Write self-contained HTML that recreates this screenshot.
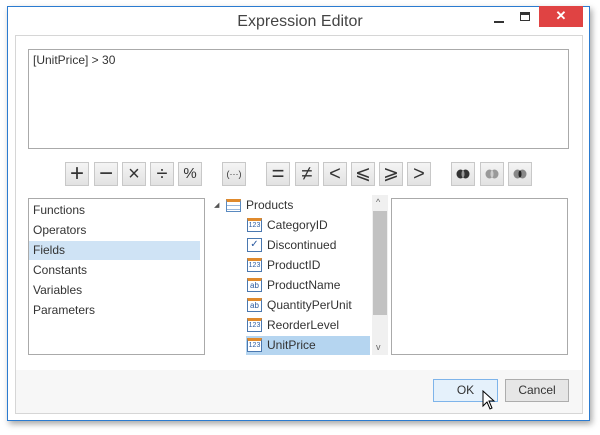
<!DOCTYPE html>
<html><head><style>
*{margin:0;padding:0;box-sizing:border-box}
body{width:600px;height:435px;background:#fff;font-family:"Liberation Sans",sans-serif;font-size:12px;color:#333;position:relative;overflow:hidden}
.abs{position:absolute}
.win{left:7px;top:6px;width:583px;height:415px;border:1px solid #2b7bd0;background:#fff;box-shadow:2px 3px 6px rgba(0,0,0,.35)}
.btn{position:absolute;top:162px;width:24px;height:24px;background:linear-gradient(#f4f4f4,#e2e2e2);border:1px solid #c8c8c8;text-align:center;line-height:22px;font-size:19px;color:#333}
.li{position:absolute;left:4px;height:19px;line-height:19px;font-size:12px;color:#333}
.ti{position:absolute;height:20px;line-height:20px;font-size:12px;color:#333}
.ic{position:absolute;width:15px;height:14px;border:1px solid #4a78b0;background:#fff;font-size:7px;line-height:9px;text-align:center;color:#2a5aa0;border-top:3px solid #e08a2c}
</style></head><body>
<div class="abs win"></div>
<div class="abs" style="left:0;top:13px;width:600px;text-align:center;font-size:16px;color:#444">Expression Editor</div>
<div class="abs" style="left:494px;top:21px;width:10px;height:2px;background:#333"></div>
<div class="abs" style="left:520px;top:12px;width:10px;height:9px;border:1px solid #333;border-top:3px solid #333"></div>
<div class="abs" style="left:539px;top:6px;width:44px;height:21px;background:#e04343;color:#fff;text-align:center;font-size:13px;font-weight:bold;line-height:20px">✕</div>
<div class="abs" style="left:15px;top:35px;width:568px;height:379px;border:1px solid #d6d6d6;background:#fff"></div>
<div class="abs" style="left:16px;top:370px;width:566px;height:43px;background:#f7f7f7"></div>
<div class="abs" style="left:28px;top:49px;width:541px;height:100px;border:1px solid #aaa;padding:3px 4px;font-size:12px">[UnitPrice] &gt; 30</div>

<div class="btn" style="left:65px;font-size:24px">+</div>
<div class="btn" style="left:94px;font-size:24px">−</div>
<div class="btn" style="left:122px;font-size:20px">×</div>
<div class="btn" style="left:150px;font-size:20px">÷</div>
<div class="btn" style="left:178px;font-size:15px">%</div>
<div class="btn" style="left:222px;font-size:9px">(···)</div>
<div class="btn" style="left:266px;font-size:22px">=</div>
<div class="btn" style="left:295px;font-size:20px">≠</div>
<div class="btn" style="left:323px;font-size:20px">&lt;</div>
<div class="btn" style="left:351px">⩽</div>
<div class="btn" style="left:379px">⩾</div>
<div class="btn" style="left:407px;font-size:20px">&gt;</div>
<div class="btn" style="left:451px"><svg width="14" height="10" style="margin-top:6px"><ellipse cx="4.5" cy="5" rx="4" ry="4.5" fill="#333"/><ellipse cx="9.5" cy="5" rx="4" ry="4.5" fill="#333"/><ellipse cx="7" cy="5" rx="1.5" ry="3.5" fill="#999"/></svg></div>
<div class="btn" style="left:480px"><svg width="14" height="10" style="margin-top:6px"><ellipse cx="4.5" cy="5" rx="4" ry="4.5" fill="#999"/><ellipse cx="9.5" cy="5" rx="4" ry="4.5" fill="#999"/><ellipse cx="7" cy="5" rx="1.5" ry="3.5" fill="#ccc"/></svg></div>
<div class="btn" style="left:508px"><svg width="14" height="10" style="margin-top:6px"><ellipse cx="4.5" cy="5" rx="4" ry="4.5" fill="#888"/><ellipse cx="9.5" cy="5" rx="4" ry="4.5" fill="#888"/><ellipse cx="7" cy="5" rx="1.5" ry="3.5" fill="#222"/></svg></div>

<div class="abs" style="left:28px;top:198px;width:177px;height:157px;border:1px solid #aaa"></div>
<div class="abs" style="left:29px;top:241px;width:171px;height:19px;background:#cfe3f5"></div>
<div class="li" style="left:33px;top:201px">Functions</div>
<div class="li" style="left:33px;top:221px">Operators</div>
<div class="li" style="left:33px;top:241px">Fields</div>
<div class="li" style="left:33px;top:261px">Constants</div>
<div class="li" style="left:33px;top:281px">Variables</div>
<div class="li" style="left:33px;top:301px">Parameters</div>

<div class="abs" style="left:372px;top:195px;width:16px;height:160px;background:#f0f0f0"></div>
<div class="abs" style="left:373px;top:211px;width:14px;height:104px;background:#c2c2c2"></div>
<div class="abs" style="left:376px;top:197px;font-size:9px;color:#666">^</div>
<div class="abs" style="left:376px;top:342px;font-size:9px;color:#666">v</div>
<div class="abs" style="left:246px;top:336px;width:124px;height:19px;background:#b5d5f0"></div>
<div class="abs" style="left:214px;top:201px;font-size:7px;color:#555">◢</div>
<div class="abs" style="left:226px;top:199px;width:15px;height:13px;border:1px solid #5a8ac0;background:repeating-linear-gradient(#fff 0 3px,#9bb9dc 3px 4px);border-top:3px solid #e08a2c"></div>
<div class="ti" style="left:246px;top:195px">Products</div>
<div class="ic" style="left:247px;top:218px">123</div><div class="ti" style="left:267px;top:215px">CategoryID</div>
<div class="ic" style="left:247px;top:238px;border-top:1px solid #4a78b0;font-size:10px;line-height:12px">✓</div><div class="ti" style="left:267px;top:235px">Discontinued</div>
<div class="ic" style="left:247px;top:258px">123</div><div class="ti" style="left:267px;top:255px">ProductID</div>
<div class="ic" style="left:247px;top:278px;font-size:8px">ab</div><div class="ti" style="left:267px;top:275px">ProductName</div>
<div class="ic" style="left:247px;top:298px;font-size:8px">ab</div><div class="ti" style="left:267px;top:295px">QuantityPerUnit</div>
<div class="ic" style="left:247px;top:318px">123</div><div class="ti" style="left:267px;top:315px">ReorderLevel</div>
<div class="ic" style="left:247px;top:338px">123</div><div class="ti" style="left:267px;top:335px">UnitPrice</div>

<div class="abs" style="left:391px;top:198px;width:177px;height:157px;border:1px solid #aaa"></div>

<div class="abs" style="left:433px;top:379px;width:65px;height:23px;border:1px solid #7eb4ea;background:#e5f1fb;text-align:center;line-height:21px">OK</div>
<div class="abs" style="left:505px;top:379px;width:64px;height:23px;border:1px solid #adadad;background:#e6e6e6;text-align:center;line-height:21px">Cancel</div>
<svg class="abs" style="left:482px;top:390px" width="14" height="22"><path d="M1 1 L1 16 L5 12 L8 19 L10 18 L7 11 L12 11 Z" fill="#fff" stroke="#000" stroke-width="1"/></svg>
</body></html>
